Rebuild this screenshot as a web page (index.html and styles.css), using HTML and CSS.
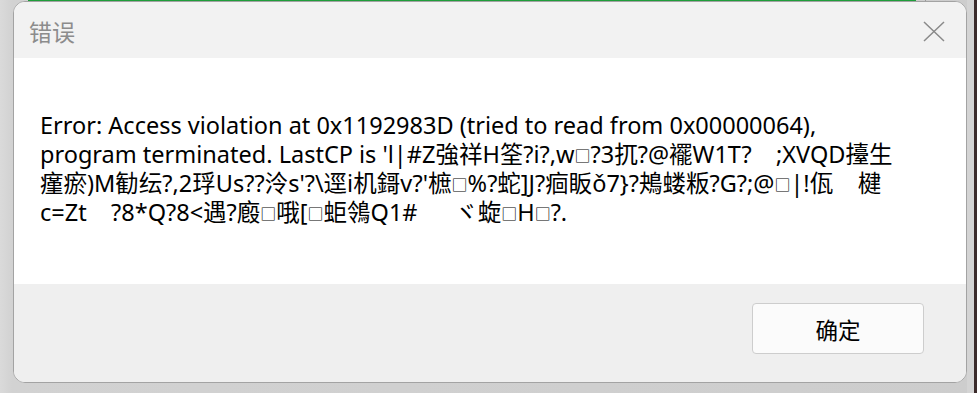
FILE: index.html
```html
<!DOCTYPE html>
<html>
<head>
<meta charset="utf-8">
<link rel="stylesheet" href="styles.css">
</head>
<body>
<div class="screen">
  <div class="topbar"><div class="green"></div><div class="tick"></div></div>
  <div class="dialog">
    <div class="titlebar">
      <span class="title">错误</span>
      <svg class="close" width="22" height="21" viewBox="0 0 22 21"><path d="M1 1 L21 20 M21 1 L1 20" stroke="#8a8a8a" stroke-width="1.5" fill="none"/></svg>
    </div>
    <div class="content">
      <p class="msg">Error: Access violation at 0x1192983D (tried to read from 0x00000064),
program terminated. LastCP is 'l|#Z強祥H筌?i?,w<span class="box">□</span>?3扤?@襬W1T?    ;XVQD擡生
瘽瘀)M勧纭?,2琈Us??泠s'?\逕i机鎶v?'樜<span class="box">□</span>%?蛇]J?痐眅ǒ7}?鴂蝼粄?G?;@<span class="box">□</span>|!佤    楗
c=Zt    ?8*Q?8&lt;遇?廏<span class="box">□</span>哦[<span class="box">□</span>蚷鴒Q1#      ヾ蜁<span class="box">□</span>H<span class="box">□</span>?.</p>
    </div>
    <div class="footer">
      <button class="ok">确定</button>
    </div>
  </div>
  <div class="rightedge"><div class="light"></div><div class="dark"></div></div>
</div>
</body>
</html>
```

FILE: styles.css
```css
html, body {
  margin: 0;
  padding: 0;
}
body {
  width: 977px;
  height: 393px;
  overflow: hidden;
  background: #cfcfcf;
  font-family: "Noto Sans", "Noto Sans CJK SC", sans-serif;
}
.screen {
  position: relative;
  width: 977px;
  height: 393px;
  display: flex;
  background: linear-gradient(to right, #dadada 0px, #d2d2d2 12px, #cdcdcd 100%);
  padding: 1px 0 0 13px;
  box-sizing: border-box;
}
.topbar {
  position: absolute;
  left: 28px;
  top: 0;
  display: flex;
  align-items: flex-start;
}
.green {
  width: 888px;
  height: 3px;
  background: #1e9e3a;
}
.tick {
  margin-left: 9px;
  width: 1px;
  height: 3px;
  background: #9a9a9a;
}
.dialog {
  width: 954px;
  height: 382px;
  box-sizing: border-box;
  border: 1.5px solid #a3a3a3;
  border-radius: 12px;
  overflow: hidden;
  display: flex;
  flex-direction: column;
  background: #fff;
  position: relative;
  z-index: 1;
}
.titlebar {
  height: 56px;
  background: #f2f2f2;
  display: flex;
  align-items: center;
  justify-content: space-between;
  padding: 0 21px 0 15px;
  flex: none;
}
.title {
  font-family: "Noto Sans CJK SC", sans-serif;
  font-size: 23px;
  color: #8c8c8c;
  margin-top: 2px;
}
.close {
  margin-top: 2px;
}
.content {
  height: 226px;
  flex: none;
  background: #fff;
  padding: 0 0 0 26px;
  box-sizing: border-box;
}
.msg {
  margin: 0;
  padding-top: 53px;
  white-space: pre;
  font-size: 23.5px;
  line-height: 29px;
  color: #000;
  font-family: "Noto Sans", "Noto Sans CJK SC", sans-serif;
}
.box {
  font-size: 16px;
  line-height: 16px;
  vertical-align: 1px;
}
.footer {
  flex: 1;
  background: #efefef;
  display: flex;
  justify-content: flex-end;
  align-items: flex-start;
  padding: 19px 42px 0 0;
}
.ok {
  width: 172px;
  height: 51px;
  background: #fbfbfb;
  border: 1px solid #cdcdcd;
  border-radius: 4px;
  font-family: "Noto Sans CJK SC", sans-serif;
  font-size: 22.5px;
  color: #000;
  padding: 0;
}
.rightedge {
  display: flex;
  margin-top: -1px;
  height: 393px;
}
.light {
  width: 7px;
  background: #d4d4d4;
}
.dark {
  width: 3px;
  background: #3b2b2b;
}
```
